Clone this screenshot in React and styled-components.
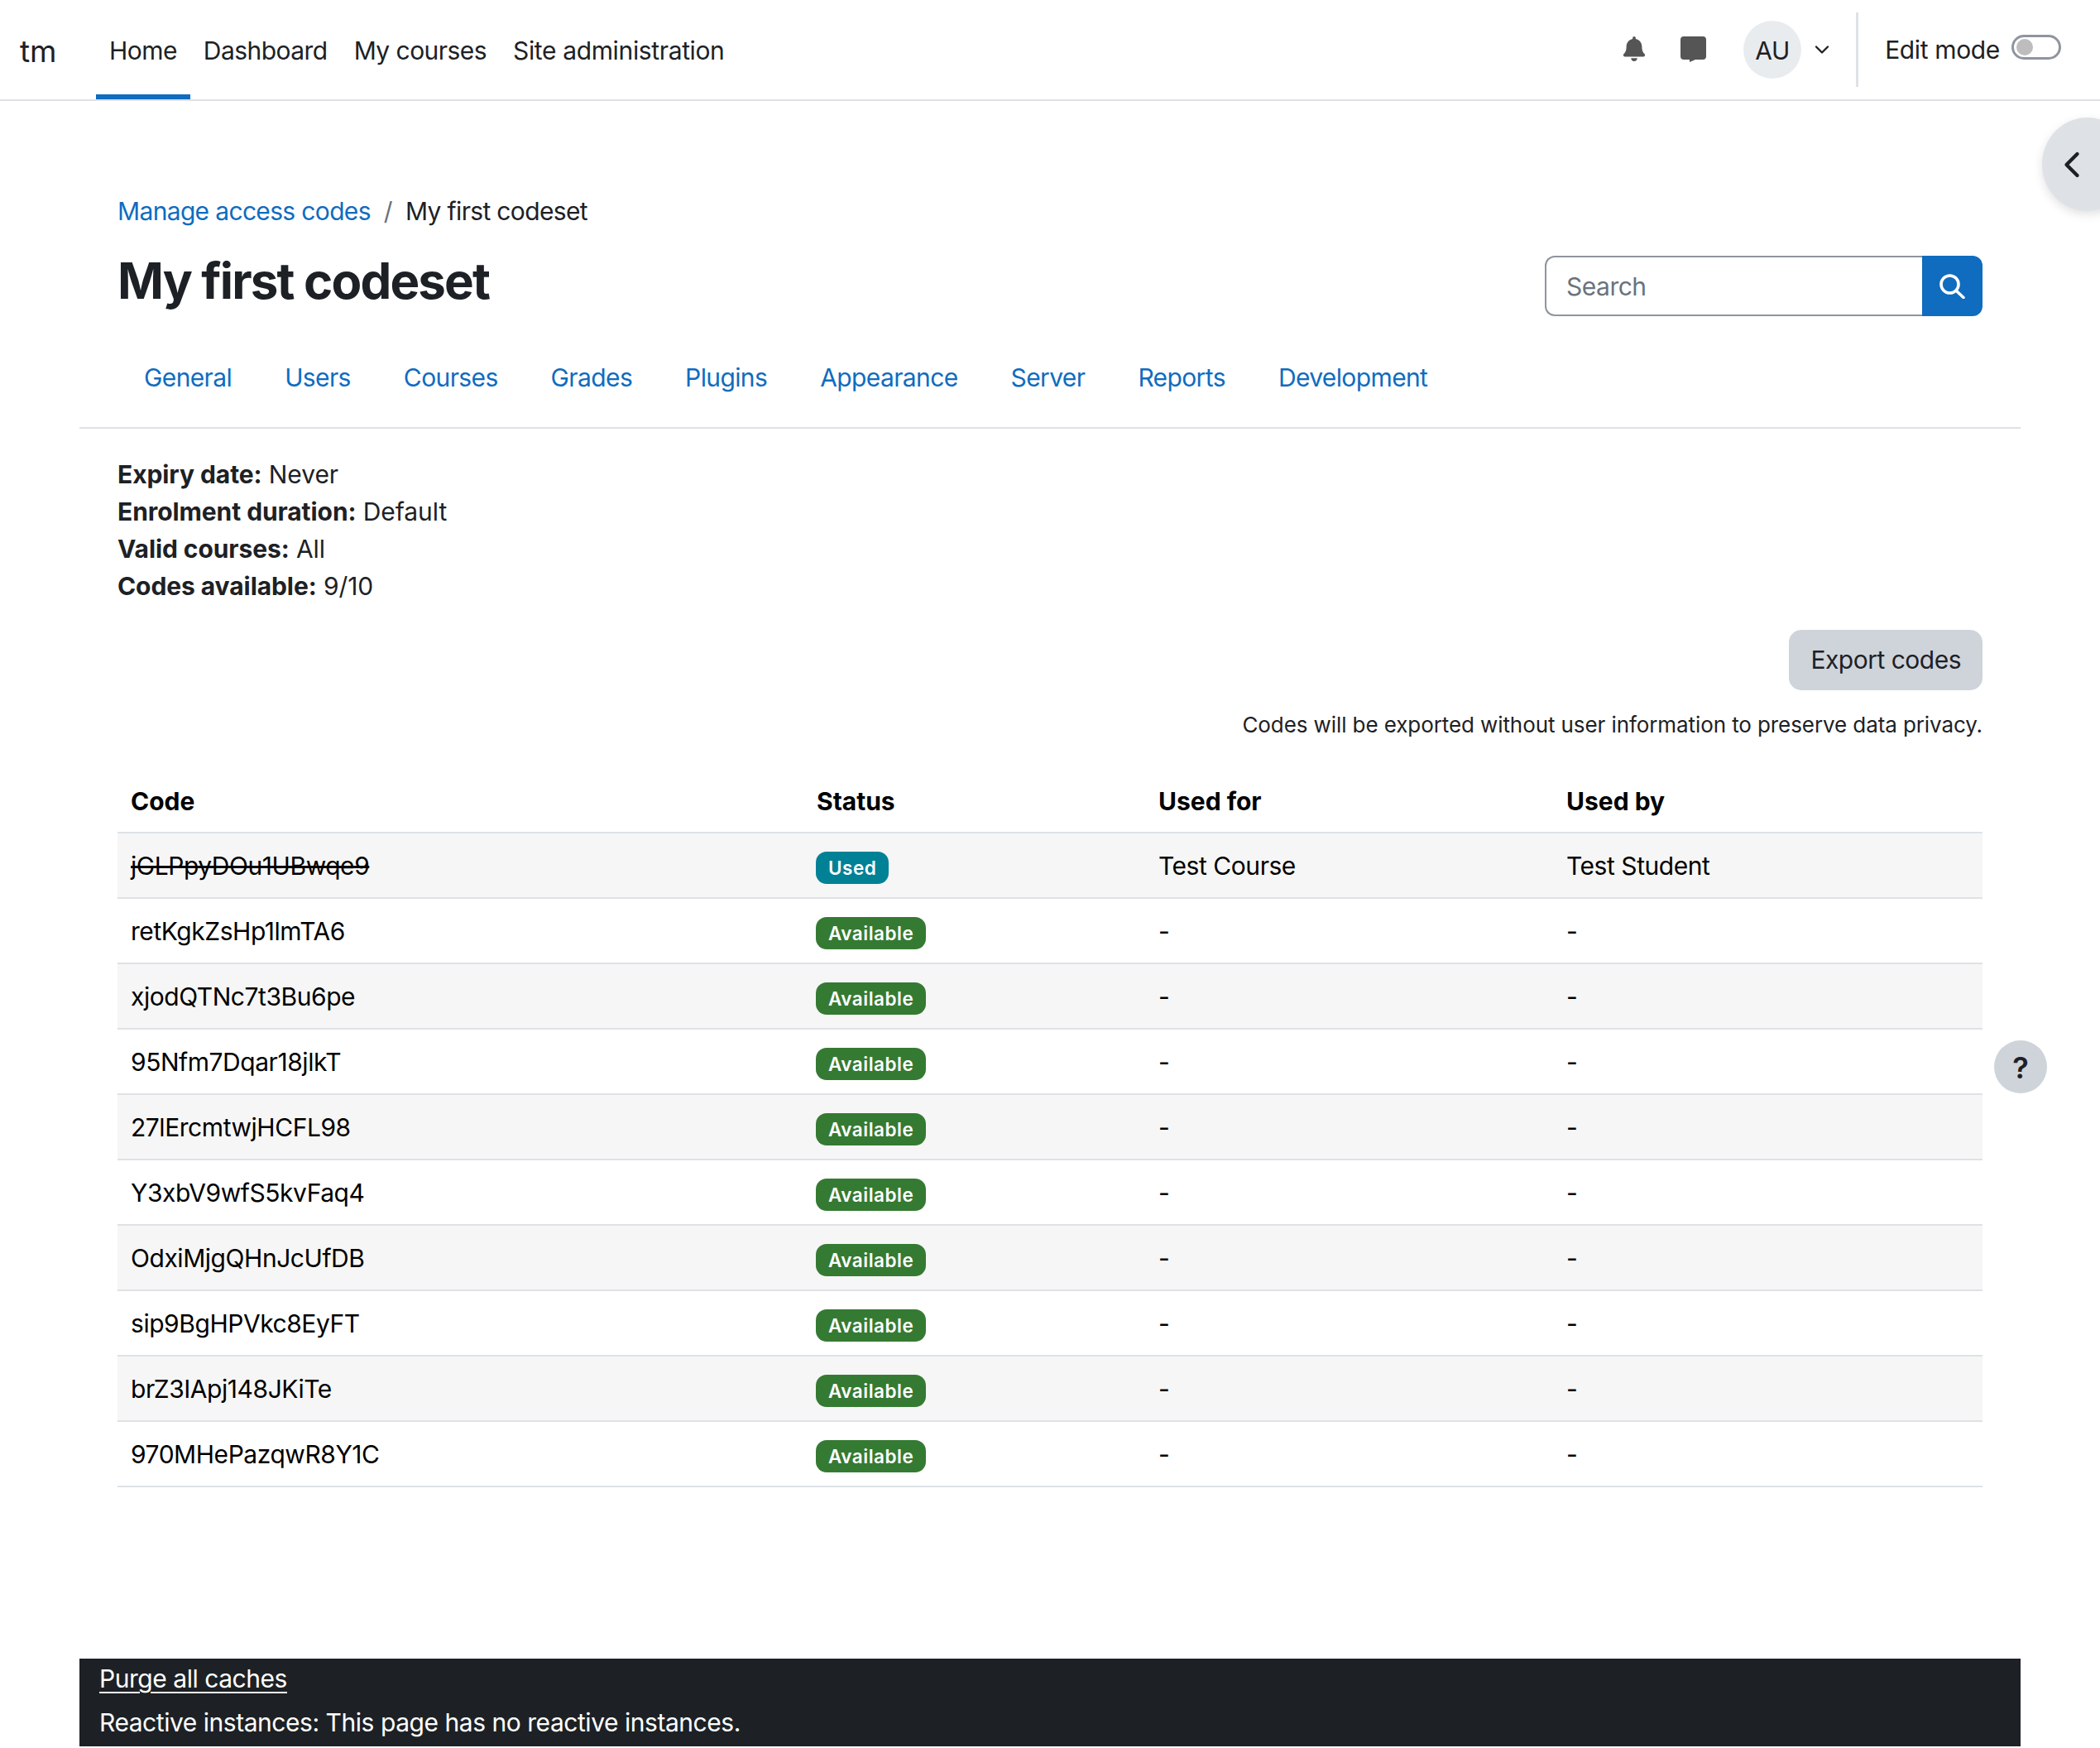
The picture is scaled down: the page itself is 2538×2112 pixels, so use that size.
import React from "react";
import styled, { createGlobalStyle } from "styled-components";
import { FaBell } from "react-icons/fa";
import { ChevronDown, ChevronLeft } from "lucide-react";

const GlobalStyle = createGlobalStyle`
  html, body {
    margin: 0;
    padding: 0;
    background: #fff;
    color: #1d2125;
    font-family: Inter, "Liberation Sans", sans-serif;
    font-size: 30px;
    line-height: 45px;
  }
  * { box-sizing: border-box; }
`;

const Page = styled.div`
  position: relative;
  width: 2538px;
  height: 2112px;
  overflow: hidden;
  display: flex;
  flex-direction: column;
`;

const Navbar = styled.header`
  height: 122px;
  flex: none;
  display: flex;
  align-items: stretch;
  border-bottom: 2px solid #dee2e6;
  padding: 0 47px 0 24px;
`;

const Brand = styled.div`
  width: 92px;
  display: flex;
  align-items: center;
  font-size: 37px;
  padding-top: 2px;
  color: #1d2125;
`;

const NavItem = styled.a`
  display: flex;
  align-items: center;
  padding: 8px 16px 0;
  letter-spacing: ${(p) => p.$ls || "-0.55px"};
  color: #1d2125;
  border-bottom: 6px solid ${(p) => (p.$active ? "#0f6cbf" : "transparent")};
`;

const NavRight = styled.div`
  margin-left: auto;
  display: flex;
  align-items: center;
`;

const IconSlot = styled.div`
  display: flex;
  align-items: center;
  justify-content: center;
  margin-right: ${(p) => p.$mr}px;
  color: #555;
  height: 32px;
  margin-top: -2px;
`;

const Avatar = styled.div`
  width: 70px;
  height: 70px;
  border-radius: 50%;
  background: #e9ecef;
  display: flex;
  align-items: center;
  justify-content: center;
  color: #1d2125;
  letter-spacing: -0.3px;
  padding-top: 2px;
`;

const Caret = styled.div`
  display: flex;
  margin-left: 11px;
  color: #1d2125;
`;

const Divider = styled.div`
  width: 3px;
  height: 90px;
  background: #dee2e6;
  margin: 0 32px 0 27px;
`;

const EditLabel = styled.div`
  margin-right: 14px;
  letter-spacing: -0.36px;
`;

const Toggle = styled.div`
  width: 60px;
  height: 30px;
  border: 3px solid #8f959e;
  border-radius: 15px;
  padding: 2px 3px;
  margin-top: -6px;
`;

const Knob = styled.div`
  width: 20px;
  height: 20px;
  border-radius: 50%;
  background: #bdbdbd;
`;

const SideButton = styled.div`
  position: absolute;
  right: -40px;
  top: 142px;
  width: 110px;
  height: 113px;
  border-radius: 50%;
  background: #dee2e6;
  box-shadow: 0 4px 12px rgba(0, 0, 0, 0.12);
  display: flex;
  align-items: center;
  padding-left: 10px;
  color: #1d2125;
`;

const HelpButton = styled.div`
  position: absolute;
  left: 2410px;
  top: 1257px;
  width: 64px;
  height: 64px;
  border-radius: 50%;
  background: #ced4da;
  display: flex;
  align-items: center;
  justify-content: center;
  font-size: 36px;
  font-weight: 600;
  padding-top: 2px;
  color: #1d2125;
`;

const Wrapper = styled.main`
  flex: 1;
  margin: 0 96px;
  display: flex;
  flex-direction: column;
`;

const Head = styled.div`
  padding: 111px 46px 0;
  display: flex;
  justify-content: space-between;
`;

const Breadcrumb = styled.nav`
  display: flex;
  align-items: center;
  height: 45px;
  color: #1d2125;
  letter-spacing: -0.66px;
`;

const Link = styled.a`
  color: #0f6cbf;
`;

const Slash = styled.span`
  margin: 0 16px;
  color: #6a737b;
`;

const Title = styled.h1`
  margin: 25px 0 0;
  font-size: 60px;
  line-height: 72px;
  font-weight: 700;
  letter-spacing: -1.85px;
`;

const SearchBox = styled.div`
  display: flex;
  width: 529px;
  height: 73px;
  margin-top: 76px;
`;

const SearchInput = styled.div`
  flex: 1;
  border: 2px solid #8f959e;
  border-right: 0;
  border-radius: 12px 0 0 12px;
  padding: 2px 24px 0;
  display: flex;
  align-items: center;
  color: #6a737b;
  letter-spacing: -0.5px;
`;

const SearchButton = styled.div`
  width: 73px;
  background: #0f6cbf;
  border-radius: 0 12px 12px 0;
  color: #fff;
  display: flex;
  align-items: center;
  justify-content: center;
`;

const Tabs = styled.nav`
  display: flex;
  margin-top: 38px;
  height: 98px;
  padding: 0 46px 24px;
  border-bottom: 2px solid #dee2e6;
  align-items: center;
`;

const Tab = styled.a`
  color: #0f6cbf;
  padding: 0 32px;
  letter-spacing: -0.62px;
`;

const Body = styled.section`
  padding: 33px 46px 0;
  display: flex;
  flex-direction: column;
`;

const InfoLine = styled.div`
  color: #1d2125;
  letter-spacing: -0.08px;
  b { font-weight: 700; }
`;

const ExportRow = styled.div`
  display: flex;
  justify-content: flex-end;
  margin-top: 30px;
`;

const ExportButton = styled.div`
  height: 73px;
  padding: 0 26px;
  border-radius: 15px;
  background: #ced4da;
  display: flex;
  align-items: center;
  color: #1d2125;
  letter-spacing: -0.5px;
`;

const Note = styled.div`
  text-align: right;
  font-size: 26px;
  line-height: 39px;
  margin-top: 22px;
  letter-spacing: -0.09px;
  color: #1d2125;
`;

const Table = styled.table`
  width: 100%;
  table-layout: fixed;
  border-collapse: collapse;
  margin-top: 32px;
  color: #000;
`;

const Th = styled.th`
  text-align: left;
  padding: 5px 16px 0;
  height: 79px;
  font-weight: 700;
  width: ${(p) => p.$w}px;
`;

const Row = styled.tr`
  background: ${(p) => (p.$odd ? "#f6f6f6" : "#fff")};
  border-top: 2px solid #dee2e6;
  border-bottom: 2px solid #dee2e6;
`;

const Td = styled.td`
  padding: 2px 16px 0;
  height: 79px;
  color: #000;
  letter-spacing: -0.45px;
  text-decoration: ${(p) => (p.$struck ? "line-through" : "none")};
`;

const Badge = styled.span`
  display: inline-flex;
  align-items: center;
  height: 39px;
  margin-left: -1px;
  padding: 0 15px;
  border-radius: 13px;
  background: ${(p) => p.$bg};
  color: #fff;
  font-size: 22.5px;
  font-weight: 600;
  letter-spacing: 0.5px;
  vertical-align: middle;
`;

const Footer = styled.footer`
  margin: auto 96px 2px;
  height: 106px;
  flex: none;
  background: #1d2125;
  color: #fff;
  padding: 2px 24px 0;
  letter-spacing: -0.46px;
`;

const FooterLink = styled.a`
  display: block;
  line-height: 45px;
  text-decoration: underline;
  text-underline-offset: 5px;
  text-decoration-thickness: 2px;
`;

const FooterLine = styled.div`
  margin-top: 8px;
  line-height: 45px;
`;

const tabs = ["General", "Users", "Courses", "Grades", "Plugins", "Appearance", "Server", "Reports", "Development"];
const codes = [
  "retKgkZsHp1lmTA6",
  "xjodQTNc7t3Bu6pe",
  "95Nfm7Dqar18jlkT",
  "27lErcmtwjHCFL98",
  "Y3xbV9wfS5kvFaq4",
  "OdxiMjgQHnJcUfDB",
  "sip9BgHPVkc8EyFT",
  "brZ3IApj148JKiTe",
  "970MHePazqwR8Y1C",
];

function App() {
  return (
    <Page>
      <GlobalStyle />
      <Navbar>
        <Brand>tm</Brand>
        <NavItem $active>Home</NavItem>
        <NavItem>Dashboard</NavItem>
        <NavItem>My courses</NavItem>
        <NavItem $ls="-0.36px">Site administration</NavItem>
        <NavRight>
          <IconSlot $mr={41}>
            <FaBell size={30} />
          </IconSlot>
          <IconSlot $mr={45}>
            <svg width="31" height="31" viewBox="0 0 31 31">
              <path d="M4 0h23a4 4 0 0 1 4 4v20a4 4 0 0 1-4 4h-9l-7 3v-3H4a4 4 0 0 1-4-4V4a4 4 0 0 1 4-4z" fill="#555" />
            </svg>
          </IconSlot>
          <Avatar>AU</Avatar>
          <Caret>
            <ChevronDown size={28} strokeWidth={2} />
          </Caret>
          <Divider />
          <EditLabel>Edit mode</EditLabel>
          <Toggle>
            <Knob />
          </Toggle>
        </NavRight>
      </Navbar>
      <SideButton>
        <ChevronLeft size={52} strokeWidth={2} />
      </SideButton>
      <HelpButton>?</HelpButton>
      <Wrapper>
        <Head>
          <div>
            <Breadcrumb>
              <Link>Manage access codes</Link>
              <Slash>/</Slash>
              <span>My first codeset</span>
            </Breadcrumb>
            <Title>My first codeset</Title>
          </div>
          <SearchBox>
            <SearchInput>Search</SearchInput>
            <SearchButton>
              <svg width="31" height="30" viewBox="0 0 31 30" fill="none" stroke="#fff" strokeWidth="3.6" strokeLinecap="round">
                <circle cx="12.5" cy="12.5" r="10.5" />
                <path d="M20.5 20.5 29 28.5" />
              </svg>
            </SearchButton>
          </SearchBox>
        </Head>
        <Tabs>
          {tabs.map((t) => (
            <Tab key={t}>{t}</Tab>
          ))}
        </Tabs>
        <Body>
          <InfoLine>
            <b>Expiry date:</b> Never
          </InfoLine>
          <InfoLine>
            <b>Enrolment duration:</b> Default
          </InfoLine>
          <InfoLine>
            <b>Valid courses:</b> All
          </InfoLine>
          <InfoLine>
            <b>Codes available:</b> 9/10
          </InfoLine>
          <ExportRow>
            <ExportButton>Export codes</ExportButton>
          </ExportRow>
          <Note>Codes will be exported without user information to preserve data privacy.</Note>
          <Table>
            <thead>
              <tr>
                <Th $w={829}>Code</Th>
                <Th $w={413}>Status</Th>
                <Th $w={493}>Used for</Th>
                <Th>Used by</Th>
              </tr>
            </thead>
            <tbody>
              <Row $odd>
                <Td $struck>jGLPpyDOu1UBwqe9</Td>
                <Td>
                  <Badge $bg="#008196">Used</Badge>
                </Td>
                <Td>Test Course</Td>
                <Td>Test Student</Td>
              </Row>
              {codes.map((c, i) => (
                <Row key={c} $odd={i % 2 === 1}>
                  <Td>{c}</Td>
                  <Td>
                    <Badge $bg="#357a32">Available</Badge>
                  </Td>
                  <Td>-</Td>
                  <Td>-</Td>
                </Row>
              ))}
            </tbody>
          </Table>
        </Body>
      </Wrapper>
      <Footer>
        <FooterLink>Purge all caches</FooterLink>
        <FooterLine>Reactive instances: This page has no reactive instances.</FooterLine>
      </Footer>
    </Page>
  );
}

export default App;
